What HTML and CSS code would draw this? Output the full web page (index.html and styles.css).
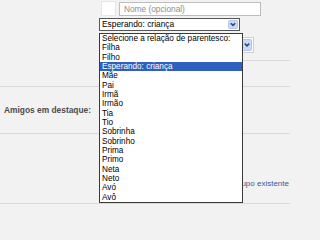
FILE: index.html
```html
<!DOCTYPE html>
<html lang="pt">
<head>
<meta charset="utf-8">
<link rel="stylesheet" href="styles.css">
</head>
<body>
<div class="page">
  <div class="sec sec1">
    <div class="row1">
      <div class="square"></div>
      <div class="input">Nome (opcional)</div>
    </div>
    <div class="select sel1">
      <span class="sel-text">Esperando: criança</span>
      <span class="arrow"><svg width="10" height="9" viewBox="0 0 10 9"><rect x="0.5" y="0.5" width="9" height="8" rx="1" fill="#c9d8f8" stroke="#b3c6ee"/><path d="M2.8 3.2 L5 5.4 L7.2 3.2" fill="none" stroke="#33487a" stroke-width="1.6"/></svg></span>
    </div>
    <div class="select sel2">
      <span class="sel-text"></span>
      <span class="arrow arrow2"><svg width="10" height="12" viewBox="0 0 10 12"><rect x="0.5" y="0.5" width="9" height="11" rx="1" fill="#c9d8f8" stroke="#b3c6ee"/><path d="M2.8 4.6 L5 6.8 L7.2 4.6" fill="none" stroke="#33487a" stroke-width="1.6"/></svg></span>
    </div>
  </div>
  <div class="sec sec2"></div>
  <div class="sec sec3"><span class="label">Amigos em destaque:</span></div>
  <div class="sec sec4"><a class="link">Adicionar a um grupo existente</a></div>
  <div class="sec sec5"></div>

  <ul class="list">
    <li>Selecione a relação de parentesco:</li>
    <li>Filha</li>
    <li>Filho</li>
    <li class="sel">Esperando: criança</li>
    <li>Mãe</li>
    <li>Pai</li>
    <li>Irmã</li>
    <li>Irmão</li>
    <li>Tia</li>
    <li>Tio</li>
    <li>Sobrinha</li>
    <li>Sobrinho</li>
    <li>Prima</li>
    <li>Primo</li>
    <li>Neta</li>
    <li>Neto</li>
    <li>Avó</li>
    <li>Avô</li>
  </ul>
</div>
</body>
</html>
```

FILE: styles.css
```css
* { box-sizing: border-box; }
html, body {
  margin: 0;
  padding: 0;
  background: #f2f2f2;
}
body {
  font-family: "Liberation Sans", Arial, sans-serif;
  font-size: 8px;
  color: #333;
}
.page {
  position: relative;
  width: 290px;
  height: 212px;
  overflow: hidden;
}
.sec1 {
  height: 61px;
  padding-top: 1px;
  border-bottom: 1px solid #d9d9d9;
  margin-left: 99px;
}
.row1 {
  display: flex;
  align-items: flex-start;
  padding-left: 2px;
}
.square {
  width: 15px;
  height: 15px;
  background: #fff;
  border: 1px solid #e6e6e6;
}
.input {
  margin-left: 3px;
  margin-top: 1px;
  width: 142px;
  height: 14px;
  background: #fff;
  border: 1px solid #bdbdbd;
  color: #8c8c8c;
  padding-left: 4px;
  line-height: 12px;
  font-size: 8.3px;
}
.select {
  display: flex;
  align-items: center;
  background: #fff;
  border: 1px solid #555;
}
.sel1 {
  margin-top: 2px;
  width: 141px;
  height: 13px;
  padding-right: 1px;
}
.sel-text {
  flex: 1;
  padding-left: 2px;
  color: #000;
  line-height: 11px;
  font-size: 8.4px;
}
.sel2 {
  margin-top: 6px;
  width: 155px;
  height: 16px;
  border-color: #cfcfcf;
  padding-right: 1px;
}
.arrow { display: flex; }
.sec2 {
  height: 26px;
  border-bottom: 1px solid #d9d9d9;
}
.sec3 {
  height: 47px;
  border-bottom: 1px solid #d9d9d9;
  display: flex;
  align-items: center;
  padding-left: 4px;
}
.label {
  font-weight: bold;
  color: #4d4d4d;
  font-size: 8.4px;
}
.sec4 {
  height: 70px;
  border-bottom: 1px solid #d9d9d9;
  display: flex;
  justify-content: flex-end;
  padding-top: 45px;
}
.link {
  color: #3b5998;
  white-space: nowrap;
  margin-right: 1px;
  line-height: 9px;
}
.list {
  position: absolute;
  left: 99px;
  top: 33px;
  width: 144px;
  height: 170px;
  margin: 0;
  padding: 0;
  list-style: none;
  background: #fff;
  border: 1px solid #3a3a3a;
  color: #000;
  font-size: 8.2px;
}
.list li {
  height: 9.33px;
  line-height: 9.33px;
  padding-left: 2px;
  white-space: nowrap;
}
.list li.sel {
  background: #2f5fbf;
  color: #fff;
}
```
